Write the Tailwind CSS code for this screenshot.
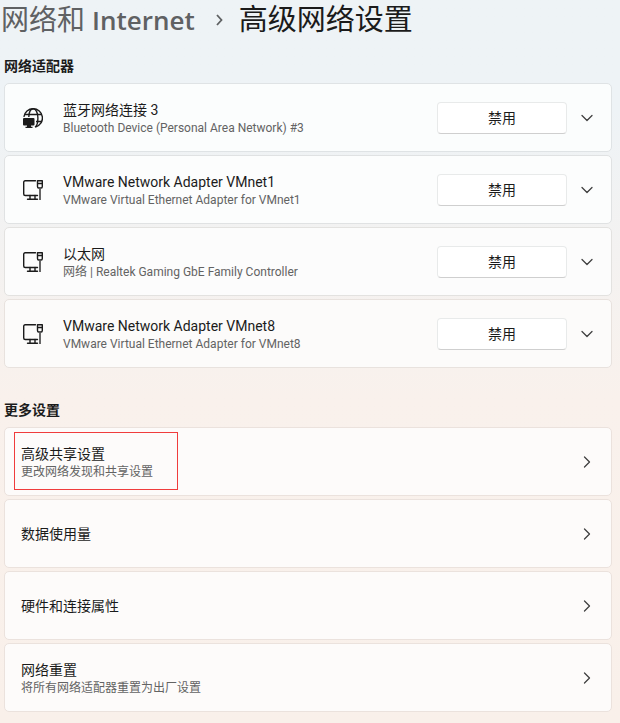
<!DOCTYPE html>
<html lang="zh-CN">
<head>
<meta charset="utf-8">
<meta name="viewport" content="width=device-width, initial-scale=1">
<title>高级网络设置</title>
<script src="https://cdn.jsdelivr.net/npm/@tailwindcss/browser@4"></script>
</head>
<body class="min-h-screen bg-linear-to-b from-[#eef3f6] from-15% via-[#f9f1ec] via-55% to-[#f9f0ea] font-[Roboto,'Noto_Sans_CJK_SC',sans-serif] text-sm leading-5 text-[#1b1b1b]">
<svg class="hidden" aria-hidden="true">
  <symbol id="down" viewBox="0 0 20 20"><path d="M5 7.500l5 5 5-5" fill="none" stroke="#404040" stroke-width="1.300" stroke-linecap="round" stroke-linejoin="round"/></symbol>
  <symbol id="right" viewBox="0 0 20 20"><path d="M7.500 5l5 5-5 5" fill="none" stroke="#404040" stroke-width="1.300" stroke-linecap="round" stroke-linejoin="round"/></symbol>
  <symbol id="ethernet" viewBox="0 0 20 20">
    <g fill="none" stroke="#1b1b1b" stroke-width="1.400" stroke-linejoin="round">
      <path d="M12.500.8H2.200Q.7.800.7 2.300V14Q.7 15.500 2.200 15.500H14.500" stroke-linecap="round"/>
      <path d="M7 15.500v3.700M12 15.500v3.700M4.500 19.200H14.500" stroke-linecap="round"/>
      <path d="M14.500.8h4.800v5.700q0 1.500-1.200 1.500h-2.400q-1.200 0-1.200-1.500zM14.500 3.500h4.800"/>
    </g>
    <path d="M17 8v12" stroke="#555" stroke-width="1.800"/>
  </symbol>
  <symbol id="globe" viewBox="0 0 20 20">
    <g fill="none" stroke="#1b1b1b" stroke-width="1.400">
      <path d="M.9 8.800A9.300 9.300 0 1 1 12.500 19"/>
      <path d="M5.800 9C6 4 7.800.7 10.300.7S14.900 4.800 14.900 10 13.500 18.300 12 19.200"/>
      <path d="M1.800 6.500H18.700M13 13.500H18.700"/>
    </g>
    <path d="M1 10h9.500q1 0 1 1v5.500q0 1-1 1H8v1.200h1.500V20H2.500v-1.300H4v-1.200H1q-1 0-1-1V11q0-1 1-1z" fill="#1b1b1b"/>
  </symbol>
</svg>
<main class="pr-2 pb-[11px] pl-1">
  <nav aria-label="路径" class="-ml-[3px] flex h-10 items-center text-[28px] leading-10 whitespace-nowrap">
    <a href="#" class="text-[#5f6163]">网络和 <span class="font-['Open_Sans',sans-serif] text-[26px] font-semibold">Internet</span></a>
    <svg class="mr-[10px] ml-[14px] size-5" viewBox="0 0 20 20" aria-hidden="true"><path d="M8 5l4.500 5-4.500 5" fill="none" stroke="#5f6163" stroke-width="1.800"/></svg>
    <h1 class="text-[29px]">高级网络设置</h1>
  </nav>

  <section>
    <h2 class="mt-4 mb-[7px] font-bold">网络适配器</h2>
    <ul class="flex flex-col gap-[3px]">
      <li class="flex h-[69px] items-center rounded-[5px] border border-[#dfe3e5] bg-[#fbfdfd] pr-[14px] pl-[18px]">
        <svg class="size-5 shrink-0" aria-hidden="true"><use href="#globe"/></svg>
        <div class="ml-5 min-w-0 flex-1">
          <h3>蓝牙网络连接 3</h3>
          <p class="text-[12px] leading-4 text-[#636363]">Bluetooth Device (Personal Area Network) #3</p>
        </div>
        <button class="h-8 w-[130px] rounded-[4px] border border-[#e8eaea] border-b-[#cfcfcf] bg-white">禁用</button>
        <button class="ml-[10px] size-5" aria-label="展开"><svg class="size-5" aria-hidden="true"><use href="#down"/></svg></button>
      </li>
      <li class="flex h-[69px] items-center rounded-[5px] border border-[#e0e2e3] bg-[#fcfdfd] pr-[14px] pl-[18px]">
        <svg class="size-5 shrink-0" aria-hidden="true"><use href="#ethernet"/></svg>
        <div class="ml-5 min-w-0 flex-1">
          <h3>VMware Network Adapter VMnet1</h3>
          <p class="text-[12px] leading-4 text-[#636363]">VMware Virtual Ethernet Adapter for VMnet1</p>
        </div>
        <button class="h-8 w-[130px] rounded-[4px] border border-[#e8eaea] border-b-[#cfcfcf] bg-white">禁用</button>
        <button class="ml-[10px] size-5" aria-label="展开"><svg class="size-5" aria-hidden="true"><use href="#down"/></svg></button>
      </li>
      <li class="flex h-[69px] items-center rounded-[5px] border border-[#e3e2e0] bg-[#fcfcfc] pr-[14px] pl-[18px]">
        <svg class="size-5 shrink-0" aria-hidden="true"><use href="#ethernet"/></svg>
        <div class="ml-5 min-w-0 flex-1">
          <h3>以太网</h3>
          <p class="text-[12px] leading-4 text-[#636363]">网络 | Realtek Gaming GbE Family Controller</p>
        </div>
        <button class="h-8 w-[130px] rounded-[4px] border border-[#e8eaea] border-b-[#cfcfcf] bg-white">禁用</button>
        <button class="ml-[10px] size-5" aria-label="展开"><svg class="size-5" aria-hidden="true"><use href="#down"/></svg></button>
      </li>
      <li class="flex h-[69px] items-center rounded-[5px] border border-[#e8e2de] bg-[#fcfbfa] pr-[14px] pl-[18px]">
        <svg class="size-5 shrink-0" aria-hidden="true"><use href="#ethernet"/></svg>
        <div class="ml-5 min-w-0 flex-1">
          <h3>VMware Network Adapter VMnet8</h3>
          <p class="text-[12px] leading-4 text-[#636363]">VMware Virtual Ethernet Adapter for VMnet8</p>
        </div>
        <button class="h-8 w-[130px] rounded-[4px] border border-[#e8eaea] border-b-[#cfcfcf] bg-white">禁用</button>
        <button class="ml-[10px] size-5" aria-label="展开"><svg class="size-5" aria-hidden="true"><use href="#down"/></svg></button>
      </li>
    </ul>
  </section>

  <section>
    <h2 class="mt-8 mb-[7px] font-bold">更多设置</h2>
    <ul class="flex flex-col gap-[3px]">
      <li class="relative">
        <a href="#" class="flex h-[69px] items-center justify-between rounded-[5px] border border-[#ebe2dd] bg-[#fdfbfa] pr-[14px] pl-4">
          <span>
            <span class="block">高级共享设置</span>
            <span class="block text-[12px] leading-4 text-[#636363]">更改网络发现和共享设置</span>
          </span>
          <svg class="size-5" aria-hidden="true"><use href="#right"/></svg>
        </a>
        <span class="pointer-events-none absolute top-[5px] left-[10px] h-[58px] w-[164px] border border-[#f03c3c]"></span>
      </li>
      <li>
        <a href="#" class="flex h-[69px] items-center justify-between rounded-[5px] border border-[#ebe2dd] bg-[#fdfbfa] pr-[14px] pl-4">
          <span>数据使用量</span>
          <svg class="size-5" aria-hidden="true"><use href="#right"/></svg>
        </a>
      </li>
      <li>
        <a href="#" class="flex h-[69px] items-center justify-between rounded-[5px] border border-[#ebe2dd] bg-[#fdfbfa] pr-[14px] pl-4">
          <span>硬件和连接属性</span>
          <svg class="size-5" aria-hidden="true"><use href="#right"/></svg>
        </a>
      </li>
      <li>
        <a href="#" class="flex h-[69px] items-center justify-between rounded-[5px] border border-[#ebe2dd] bg-[#fdfbfa] pr-[14px] pl-4">
          <span>
            <span class="block">网络重置</span>
            <span class="block text-[12px] leading-4 text-[#636363]">将所有网络适配器重置为出厂设置</span>
          </span>
          <svg class="size-5" aria-hidden="true"><use href="#right"/></svg>
        </a>
      </li>
    </ul>
  </section>
</main>
</body>
</html>
